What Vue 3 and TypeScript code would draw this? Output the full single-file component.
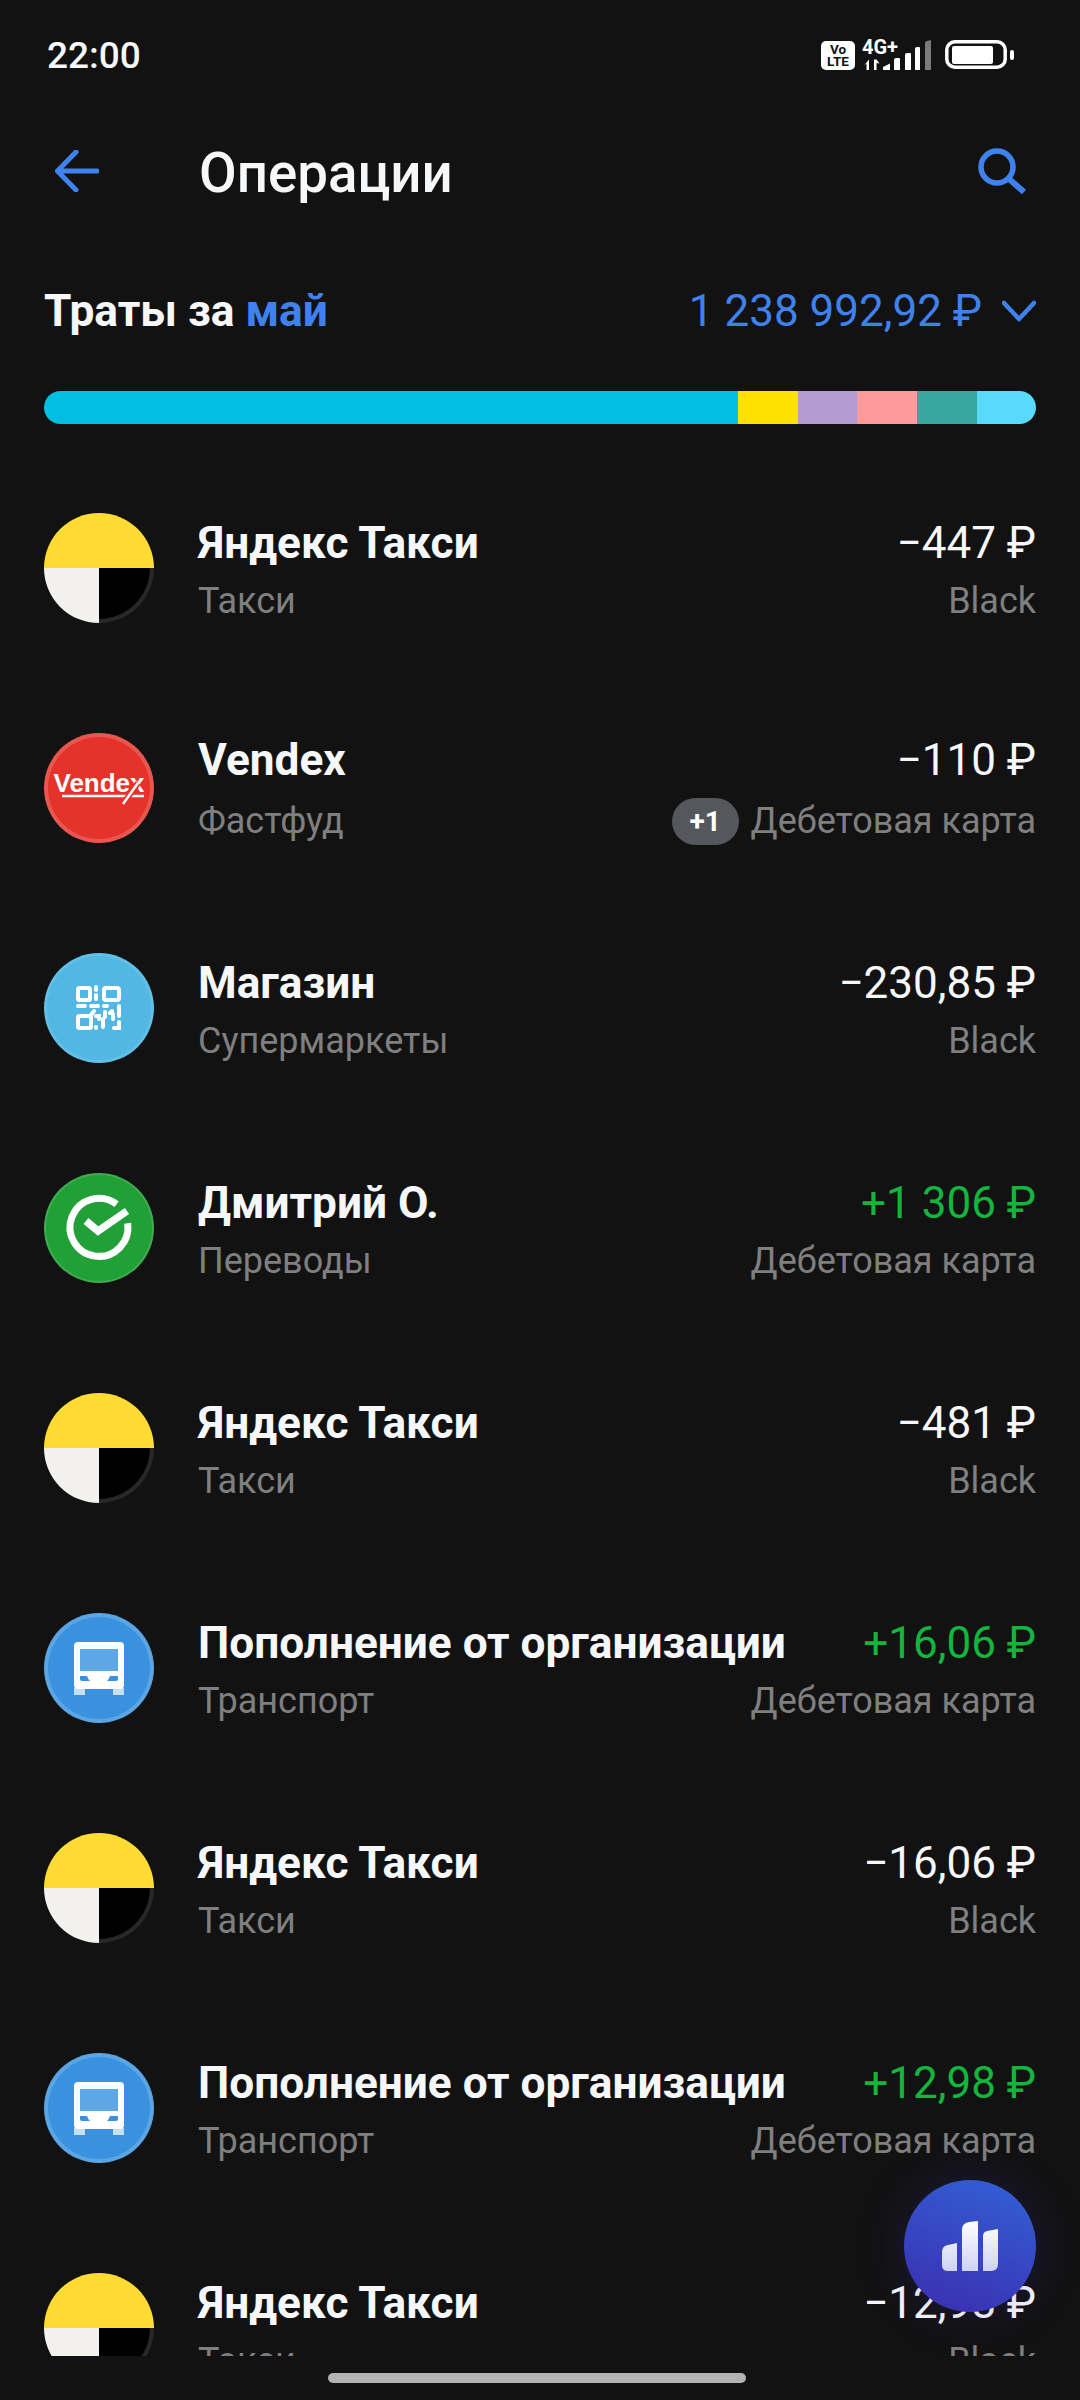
<script setup lang="ts">
type Kind = "taxi" | "vendex" | "qr" | "sber" | "bus";

interface Operation {
  kind: Kind;
  title: string;
  category: string;
  amount: string;
  income?: boolean;
  badge?: string;
  source: string;
}

const segments = [
  { color: "#00bfe0", width: 694 },
  { color: "#ffe100", width: 60 },
  { color: "#b39ad0", width: 59 },
  { color: "#ff9a9a", width: 60 },
  { color: "#37a89e", width: 60 },
  { color: "#59d9fc", width: 59 },
];

const operations: Operation[] = [
  { kind: "taxi", title: "Яндекс Такси", category: "Такси", amount: "−447 ₽", source: "Black" },
  { kind: "vendex", title: "Vendex", category: "Фастфуд", amount: "−110 ₽", badge: "+1", source: "Дебетовая карта" },
  { kind: "qr", title: "Магазин", category: "Супермаркеты", amount: "−230,85 ₽", source: "Black" },
  { kind: "sber", title: "Дмитрий О.", category: "Переводы", amount: "+1 306 ₽", income: true, source: "Дебетовая карта" },
  { kind: "taxi", title: "Яндекс Такси", category: "Такси", amount: "−481 ₽", source: "Black" },
  { kind: "bus", title: "Пополнение от организации", category: "Транспорт", amount: "+16,06 ₽", income: true, source: "Дебетовая карта" },
  { kind: "taxi", title: "Яндекс Такси", category: "Такси", amount: "−16,06 ₽", source: "Black" },
  { kind: "bus", title: "Пополнение от организации", category: "Транспорт", amount: "+12,98 ₽", income: true, source: "Дебетовая карта" },
  { kind: "taxi", title: "Яндекс Такси", category: "Такси", amount: "−12,98 ₽", source: "Black" },
];
</script>

<template>
  <div class="screen">
    <div class="status">
      <span class="time">22:00</span>
      <svg class="status-icons" width="193" height="48" viewBox="0 -8 193 48">
        <rect x="0" y="2" width="34" height="29" rx="5" fill="#fff" />
        <text x="17" y="14.500" class="volte" text-anchor="middle">Vo</text>
        <text x="17" y="27" class="volte" text-anchor="middle">LTE</text>
        <text x="41" y="14.500" class="net">4G+</text>
        <path d="M48 20.500v10.500h-2.500v-6.500l-2.500 2zM53 31V20.500h2.500l3 4-3-.5v7z" fill="#fff" />
        <path d="M62 31v-3l7-3.500V31zM73 31V21q0-2 2-2h3q1 0 1 1v11zM84 31V16q0-2 2-2h3q1 0 1 1v16zM94 31V10q0-2 2-2h2q1 0 1 1v22z" fill="#fff" />
        <path d="M104 31V4q0-2 2-2l4-1v30z" fill="#7a7a7a" />
        <rect x="125.800" y="2.800" width="58.400" height="25.400" rx="8" fill="none" stroke="#fff" stroke-width="3.500" />
        <rect x="131" y="7" width="41" height="18" rx="2" fill="#fff" />
        <rect x="189" y="11" width="4" height="10" rx="2" fill="#fff" />
      </svg>
    </div>

    <div class="toolbar">
      <svg class="back" width="44" height="42" viewBox="0 0 44 42" fill="none">
        <path d="M21 2 2.500 21 21 40M3 21h39" stroke="#3f82ee" stroke-width="5" stroke-linecap="round" stroke-linejoin="round" />
      </svg>
      <span class="title">Операции</span>
      <svg class="search" width="48" height="46" viewBox="0 0 48 46" fill="none">
        <circle cx="19" cy="19" r="16" stroke="#3f82ee" stroke-width="5.500" />
        <path d="M30.500 30.500 46 44" stroke="#3f82ee" stroke-width="6" />
      </svg>
    </div>

    <div class="summary">
      <span class="summary-label">Траты за <span class="accent">май</span></span>
      <span class="summary-total">
        <span class="accent">1 238 992,92 ₽</span>
        <svg width="34" height="22" viewBox="0 0 34 22" fill="none">
          <path d="M2 3 17 19 32 3" stroke="#3f82ee" stroke-width="4.500" stroke-linecap="round" stroke-linejoin="round" />
        </svg>
      </span>
    </div>

    <div class="spend-bar">
      <div
        v-for="seg in segments"
        :key="seg.color"
        :style="{ background: seg.color, width: seg.width + 'px' }"
      ></div>
    </div>

    <div class="list">
      <div v-for="(op, i) in operations" :key="i" class="row" :class="{ tall: op.badge }">
        <svg class="avatar" width="110" height="110" viewBox="0 0 110 110">
          <template v-if="op.kind === 'taxi'">
            <path d="M0 55a55 55 0 0 1 110 0z" fill="#ffdb33" />
            <path d="M0 55h55v55A55 55 0 0 1 0 55z" fill="#f2f1ed" />
            <path d="M55 55h55a55 55 0 0 1-55 55z" fill="#282828" />
            <path d="M55 55h51a51 51 0 0 1-51 51z" fill="#000" />
          </template>
          <template v-else-if="op.kind === 'vendex'">
            <circle cx="55" cy="55" r="55" fill="#e8574f" />
            <circle cx="55" cy="55" r="51" fill="#e5322a" />
            <text x="55" y="59" class="vendex" text-anchor="middle">Vendex</text>
            <path d="M18 63h82" stroke="#fff" stroke-width="2.500" />
            <path d="M79 71 94 50" stroke="#e5322a" stroke-width="6" />
            <path d="M79 71 94 50" stroke="#fff" stroke-width="2.500" />
          </template>
          <template v-else-if="op.kind === 'qr'">
            <circle cx="55" cy="55" r="55" fill="#62bfe6" />
            <circle cx="55" cy="55" r="52" fill="#52b8e3" />
            <g fill="none" stroke="#fff" stroke-width="4" stroke-linecap="round">
              <rect x="34" y="35" width="12" height="12" rx="1.500" />
              <rect x="60" y="35" width="15" height="12" rx="2" />
              <rect x="34" y="63" width="13" height="12" rx="1.500" />
              <path d="M52 34v3M52 42v4M34 53h7M47 53h7M60 53h3M61 59v5M75 53v10M68 58l-2 2M69 61v5M52 63h3v3M59 66v8M75 69v6h-5M52 74v1M47 62l3-4" />
            </g>
          </template>
          <template v-else-if="op.kind === 'sber'">
            <circle cx="55" cy="55" r="55" fill="#3fad4f" />
            <circle cx="55" cy="55" r="53" fill="#21a038" />
            <path d="M72.600 31.300A29 29 0 1 0 83.700 50.300" fill="none" stroke="#fff" stroke-width="7" />
            <path d="M42 48 54 58 83 38" fill="none" stroke="#fff" stroke-width="7.500" />
          </template>
          <template v-else>
            <circle cx="55" cy="55" r="55" fill="#5aa5e4" />
            <circle cx="55" cy="55" r="51" fill="#3a92df" />
            <path d="M30 75h11v7H30zM69 75h11v7H69z" fill="#c5dff5" />
            <rect x="30" y="29" width="50" height="47" rx="4" fill="#fff" />
            <rect x="36" y="36" width="38" height="22" fill="#5ca7e6" />
            <path d="M36 63h7q1 3 3 5h-8q-2 0-2-2zM74 63h-8q-1 3-3 5h9q2 0 2-2z" fill="#3a92df" />
          </template>
        </svg>
        <div class="info">
          <div class="op-title">{{ op.title }}</div>
          <div class="op-sub">{{ op.category }}</div>
        </div>
        <div class="side">
          <div class="op-amount" :class="{ income: op.income }">{{ op.amount }}</div>
          <div class="op-source">
            <span v-if="op.badge" class="badge">{{ op.badge }}</span>
            <span class="op-sub">{{ op.source }}</span>
          </div>
        </div>
      </div>
    </div>

    <div class="home-bar"></div>

    <div class="fab">
      <svg width="132" height="132" viewBox="0 0 132 132">
        <defs>
          <linearGradient id="fabBars" x1="0" y1="0" x2="0" y2="1">
            <stop offset="0" stop-color="#ffffff" />
            <stop offset="1" stop-color="#ced2f0" />
          </linearGradient>
        </defs>
        <path
          d="M38 91V72q0-6 6-7l9-2v28H44q-6 0-6-6zM58 91V50q0-7 7-8l9-1v50zM79 91V56q0-4 4-5l11-2v35q0 7-7 7z"
          fill="url(#fabBars)"
        />
      </svg>
    </div>
  </div>
</template>

<style>
html,
body {
  background: #121212;
}
</style>

<style scoped>
.screen {
  position: relative;
  width: 1080px;
  height: 2400px;
  overflow: hidden;
  background: #121212;
  color: #f6f7f9;
  font-family: Roboto, "Noto Sans", sans-serif;
}

.status {
  display: flex;
  align-items: center;
  justify-content: space-between;
  height: 110px;
  padding: 0 66px 0 47px;
}

.time {
  font-size: 37px;
  font-weight: 500;
}

.status-icons {
  margin-top: -1px;
}

.volte {
  font-size: 13.500px;
  font-weight: 700;
  fill: #121212;
}

.net {
  font-size: 20px;
  font-weight: 700;
  fill: #fff;
}

.toolbar {
  display: flex;
  align-items: center;
  height: 122px;
  padding: 0 54px 0 55px;
}

.back {
  margin-right: 100px;
}

.title {
  flex: 1;
  font-size: 54.700px;
  font-weight: 500;
  margin-top: 4px;
}

.summary {
  display: flex;
  align-items: center;
  justify-content: space-between;
  height: 158px;
  padding: 0 44px;
  font-size: 44px;
}

.summary-label {
  font-size: 44.300px;
  font-weight: 700;
}

.summary-total {
  display: flex;
  align-items: center;
  gap: 20px;
}

.accent {
  color: #3f82ee;
}

.spend-bar {
  display: flex;
  height: 33px;
  margin: 1px 44px 34px;
  border-radius: 17px;
  overflow: hidden;
}

.list {
  height: 1898px;
  overflow: hidden;
}

.row {
  display: flex;
  align-items: center;
  height: 220px;
  padding: 9px 44px 0;
  box-sizing: border-box;
}

.avatar {
  flex: none;
  margin: -9px 44px 0 0;
}

.vendex {
  font-family: "Liberation Sans", sans-serif;
  font-size: 26px;
  font-weight: 700;
  fill: #fff;
}

.info {
  flex: 1;
  min-width: 0;
}

.op-title {
  font-size: 44.200px;
  font-weight: 700;
  line-height: 57px;
  white-space: nowrap;
}

.op-sub {
  font-size: 36px;
  line-height: 59px;
  color: #7f7f7f;
}

.tall .op-sub {
  line-height: 65px;
}

.side {
  display: flex;
  flex-direction: column;
  align-items: flex-end;
}

.op-amount {
  font-size: 44px;
  line-height: 57px;
  white-space: nowrap;
}

.income {
  color: #14b53c;
}

.op-source {
  display: flex;
  align-items: center;
  gap: 12px;
  white-space: nowrap;
}

.badge {
  width: 67px;
  height: 47px;
  border-radius: 24px;
  background: #54575c;
  color: #fff;
  font-size: 28px;
  font-weight: 700;
  line-height: 47px;
  text-align: center;
}

.home-bar {
  width: 418px;
  height: 10px;
  margin: 17px 0 0 328px;
  border-radius: 5px;
  background: #b3b3b3;
}

.fab {
  position: absolute;
  left: 904px;
  top: 2180px;
  width: 132px;
  height: 132px;
  border-radius: 50%;
  background: linear-gradient(20deg, #3a32b4 10%, #335cd2 90%);
  box-shadow: 0 0 50px rgba(58, 50, 200, 0.22);
}
</style>
